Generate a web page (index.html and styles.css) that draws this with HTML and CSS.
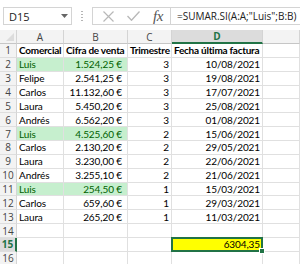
FILE: index.html
```html
<!DOCTYPE html>
<html lang="es">
<head>
    <meta charset="UTF-8">
    <meta name="viewport" content="width=device-width, initial-scale=1.0">
    <title>SUMAR.SI</title>
    <link rel="stylesheet" href="styles.css">
</head>
<body>
    <div class="toolbar">
        <div class="namebox">
            <span>D15</span>
            <svg width="7" height="4" viewBox="0 0 7 4"><path d="M0 0h7L3.5 4z" fill="#666"/></svg>
        </div>
        <div class="sep">
            <svg width="2" height="11" viewBox="0 0 2 11"><g fill="#b5b5b5"><rect y="0" width="2" height="1"/><rect y="3" width="2" height="1"/><rect y="6" width="2" height="1"/><rect y="9" width="2" height="1"/></g></svg>
        </div>
        <div class="fbar">
            <div class="fbar-buttons">
                <svg class="ico-x" width="11" height="11" viewBox="0 0 11 11"><path d="M0.5 0.5l10 10M10.5 0.5l-10 10" stroke="#b8b8b8" stroke-width="1.2" fill="none"/></svg>
                <svg class="ico-ok" width="13" height="10" viewBox="0 0 13 10"><path d="M0.5 5l4 4.3L12.5 0.5" stroke="#b8b8b8" stroke-width="1.3" fill="none"/></svg>
                <span class="fx">fx</span>
            </div>
            <div class="formula">=SUMAR.SI(A:A;"Luis";B:B)</div>
        </div>
    </div>

    <div class="sheet">
        <div class="corner"></div>
        <div class="ch">A</div>
        <div class="ch">B</div>
        <div class="ch">C</div>
        <div class="ch ch-sel">D</div>
        <div class="ch"></div>

        <div class="rh">1</div>
        <div class="c b">Comercial</div>
        <div class="c b">Cifra de venta</div>
        <div class="c b">Trimestre</div>
        <div class="c b">Fecha última factura</div>
        <div class="c"></div>

        <div class="rh">2</div>
        <div class="c g">Luis</div>
        <div class="c g r eur">1.524,25 €</div>
        <div class="c r">3</div>
        <div class="c r">10/08/2021</div>
        <div class="c"></div>

        <div class="rh">3</div>
        <div class="c">Felipe</div>
        <div class="c r eur">2.541,25 €</div>
        <div class="c r">3</div>
        <div class="c r">19/08/2021</div>
        <div class="c"></div>

        <div class="rh">4</div>
        <div class="c">Carlos</div>
        <div class="c r eur">11.132,60 €</div>
        <div class="c r">3</div>
        <div class="c r">17/07/2021</div>
        <div class="c"></div>

        <div class="rh">5</div>
        <div class="c">Laura</div>
        <div class="c r eur">5.450,20 €</div>
        <div class="c r">3</div>
        <div class="c r">25/08/2021</div>
        <div class="c"></div>

        <div class="rh">6</div>
        <div class="c">Andrés</div>
        <div class="c r eur">6.562,20 €</div>
        <div class="c r">3</div>
        <div class="c r">01/08/2021</div>
        <div class="c"></div>

        <div class="rh">7</div>
        <div class="c g">Luis</div>
        <div class="c g r eur">4.525,60 €</div>
        <div class="c r">2</div>
        <div class="c r">15/06/2021</div>
        <div class="c"></div>

        <div class="rh">8</div>
        <div class="c">Carlos</div>
        <div class="c r eur">2.130,20 €</div>
        <div class="c r">2</div>
        <div class="c r">29/05/2021</div>
        <div class="c"></div>

        <div class="rh">9</div>
        <div class="c">Laura</div>
        <div class="c r eur">3.230,00 €</div>
        <div class="c r">2</div>
        <div class="c r">22/06/2021</div>
        <div class="c"></div>

        <div class="rh">10</div>
        <div class="c">Andrés</div>
        <div class="c r eur">3.255,10 €</div>
        <div class="c r">2</div>
        <div class="c r">21/06/2021</div>
        <div class="c"></div>

        <div class="rh">11</div>
        <div class="c g">Luis</div>
        <div class="c g r eur">254,50 €</div>
        <div class="c r">1</div>
        <div class="c r">15/03/2021</div>
        <div class="c"></div>

        <div class="rh">12</div>
        <div class="c">Carlos</div>
        <div class="c r eur">659,60 €</div>
        <div class="c r">1</div>
        <div class="c r">29/03/2021</div>
        <div class="c"></div>

        <div class="rh">13</div>
        <div class="c">Laura</div>
        <div class="c r eur">265,20 €</div>
        <div class="c r">1</div>
        <div class="c r">11/03/2021</div>
        <div class="c"></div>

        <div class="rh">14</div>
        <div class="c"></div>
        <div class="c"></div>
        <div class="c"></div>
        <div class="c"></div>
        <div class="c"></div>

        <div class="rh rh-sel">15</div>
        <div class="c"></div>
        <div class="c"></div>
        <div class="c"></div>
        <div class="c r active">6304,35</div>
        <div class="c"></div>

        <div class="rh">16</div>
        <div class="c"></div>
        <div class="c"></div>
        <div class="c"></div>
        <div class="c"></div>
        <div class="c"></div>
    </div>
</body>
</html>
```

FILE: styles.css
```css
body {
    margin: 0;
    width: 300px;
    height: 264px;
    overflow: hidden;
    background-color: #fff;
    font-family: Lato, "Liberation Sans", sans-serif;
}
.toolbar {
    height: 30px;
    box-sizing: border-box;
    padding-top: 7px;
    display: flex;
    align-items: flex-start;
    font-family: "Open Sans", "Noto Sans", sans-serif;
    font-size: 11px;
    color: #222;
}
.namebox {
    margin-left: 3px;
    width: 69px;
    height: 18px;
    box-sizing: border-box;
    border: 1px solid #d4d4d4;
    display: flex;
    align-items: center;
    justify-content: space-between;
    padding: 0 3px 0 5px;
}
.sep {
    width: 20px;
    height: 18px;
    display: flex;
    align-items: center;
    justify-content: center;
}
.fbar {
    flex: 1;
    height: 18px;
    box-sizing: border-box;
    border: 1px solid #d4d4d4;
    border-right: none;
    display: flex;
}
.fbar-buttons {
    width: 77px;
    display: flex;
    align-items: center;
}
.ico-x {
    margin-left: 10px;
}
.ico-ok {
    margin-left: 13px;
}
.fx {
    margin-left: 13px;
    font-family: "Liberation Serif", serif;
    font-style: italic;
    font-size: 15px;
    color: #555;
    letter-spacing: -0.5px;
}
.formula {
    border-left: 1px solid #d4d4d4;
    padding-left: 6px;
    line-height: 16px;
    font-size: 10px;
    white-space: nowrap;
}
.sheet {
    display: grid;
    grid-template-columns: 17px 47px 64px 44px 91px 1fr;
    grid-template-rows: 14px repeat(16, 13.86px);
    font-size: 10px;
    letter-spacing: -0.1px;
}
.corner,
.ch,
.rh {
    box-sizing: border-box;
    background-color: #f3f3f3;
    border-right: 1px solid #d4d4d4;
    border-bottom: 1px solid #c6c6c6;
    font-family: "Open Sans", "Noto Sans", sans-serif;
    font-size: 10px;
    letter-spacing: 0;
    color: #444;
    display: flex;
    align-items: center;
    justify-content: center;
}
.corner {
    position: relative;
}
.corner::after {
    content: "";
    position: absolute;
    right: 2px;
    bottom: 2px;
    border-left: 8px solid transparent;
    border-bottom: 8px solid #dcdcdc;
}
.rh {
    border-bottom-color: #dedede;
}
.ch-sel,
.rh-sel {
    background-color: #dcdcdc;
    color: #217346;
    font-weight: bold;
}
.ch-sel {
    border-bottom: 2px solid #217346;
}
.rh-sel {
    border-right: 2px solid #217346;
}
.c {
    box-sizing: border-box;
    border-right: 1px solid #e0e0e0;
    border-bottom: 1px solid #e0e0e0;
    padding: 0 2px;
    display: flex;
    align-items: center;
    white-space: nowrap;
    color: #000;
}
.b {
    font-weight: bold;
    letter-spacing: -0.25px;
}
.r {
    justify-content: flex-end;
}
.eur {
    padding-right: 5px;
}
.g {
    background-color: #c6efce;
    color: #006100;
}
.active {
    position: relative;
    background-color: #ffff00;
}
.active::before {
    content: "";
    position: absolute;
    left: -1px;
    top: -1px;
    right: -1px;
    bottom: -1px;
    border: 2px solid #217346;
}
.active::after {
    content: "";
    position: absolute;
    right: -3px;
    bottom: -3px;
    width: 4px;
    height: 4px;
    background-color: #217346;
    border: 1px solid #fff;
}
```
